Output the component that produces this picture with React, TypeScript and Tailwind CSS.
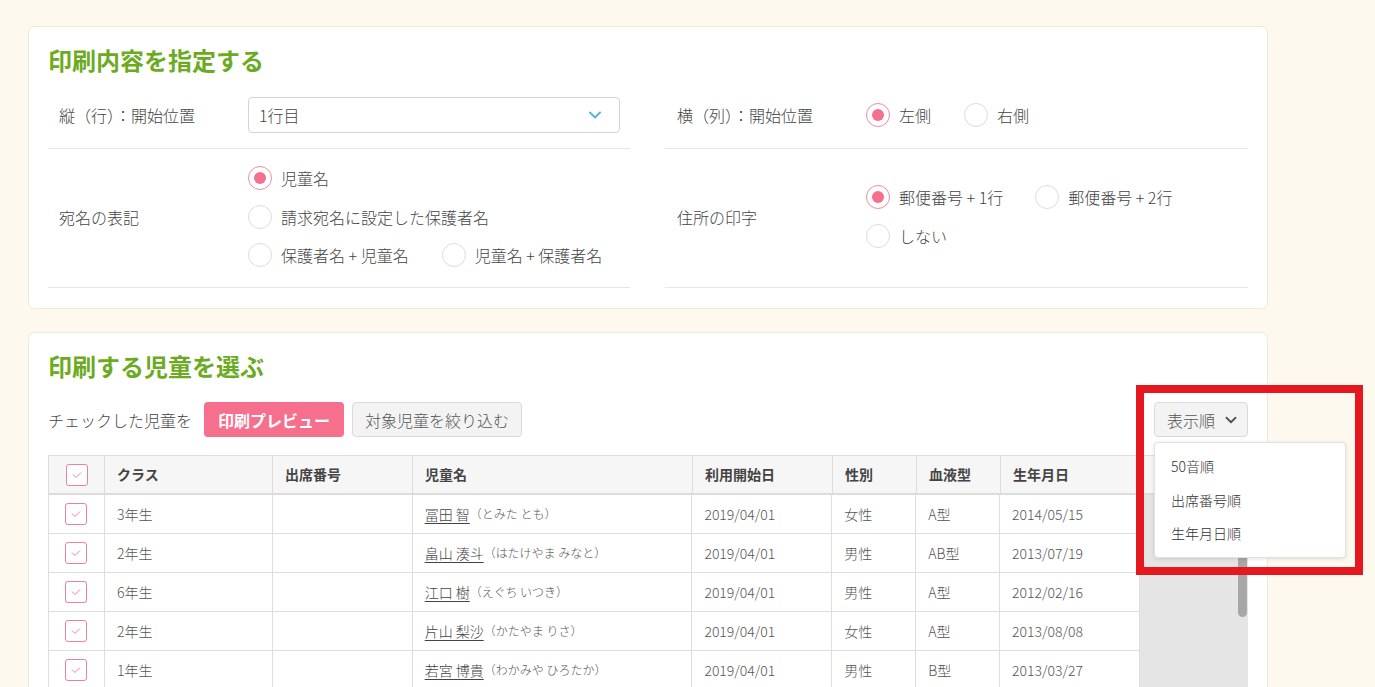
import React from "react";
import { ChevronDown } from "lucide-react";

function Radio({ checked, label }: { checked?: boolean; label: string }) {
  return (
    <div className="flex items-center h-8 gap-[9px]">
      <span
        className={
          checked
            ? "w-6 h-6 rounded-full border border-[#f28aa2] bg-white flex items-center justify-center"
            : "w-6 h-6 rounded-full border border-[#dcdcdc] bg-white flex items-center justify-center"
        }
      >
        {checked && <span className="w-3 h-3 rounded-full bg-[#f4708d]" />}
      </span>
      <span className="text-[16px] text-[#444]">{label}</span>
    </div>
  );
}

function Check() {
  return (
    <span className="w-[22px] h-[22px] rounded-[3px] border border-[#e9829c] bg-white flex items-center justify-center">
      <svg width="12" height="10" viewBox="0 0 12 10">
        <polyline points="2,4.5 5,7.5 10,2.5" fill="none" stroke="#e9829c" strokeWidth="1" />
      </svg>
    </span>
  );
}

const rows = [
  { cls: "3年生", name: "冨田 智", kana: "（とみた とも）", start: "2019/04/01", sex: "女性", blood: "A型", birth: "2014/05/15" },
  { cls: "2年生", name: "畠山 湊斗", kana: "（はたけやま みなと）", start: "2019/04/01", sex: "男性", blood: "AB型", birth: "2013/07/19" },
  { cls: "6年生", name: "江口 樹", kana: "（えぐち いつき）", start: "2019/04/01", sex: "男性", blood: "A型", birth: "2012/02/16" },
  { cls: "2年生", name: "片山 梨沙", kana: "（かたやま りさ）", start: "2019/04/01", sex: "女性", blood: "A型", birth: "2013/08/08" },
  { cls: "1年生", name: "若宮 博貴", kana: "（わかみや ひろたか）", start: "2019/04/01", sex: "男性", blood: "B型", birth: "2013/03/27" },
];

export default function App() {
  return (
    <div className="relative w-[1375px] h-[687px] overflow-hidden bg-[#fdf9ee] pt-[26px] pl-[28px] font-['Noto_Sans_CJK_JP','Noto_Sans',sans-serif] font-light text-[#444]">
      {/* Card 1 */}
      <div className="w-[1240px] bg-white rounded-[6px] border border-[#f0ead9] px-[19px] pt-[17px] pb-5">
        <h2 className="h-8 leading-8 text-[24px] font-bold text-[#6cab21] mb-[6px]">印刷内容を指定する</h2>
        <div className="grid grid-cols-[582px_583px] gap-x-[35px]">
          <div className="flex items-center py-[15px] border-b border-[#e6e6e6]">
            <div className="w-[200px] pl-[11px] text-[16px]">縦（行）：開始位置</div>
            <div className="w-[372px] h-9 border border-[#d4d4d4] rounded-[4px] flex items-center justify-between pl-[10px] pr-[14px]">
              <span className="text-[16px]">1行目</span>
              <ChevronDown size={20} strokeWidth={2.5} color="#5cb6d4" />
            </div>
          </div>
          <div className="flex items-center py-[15px] border-b border-[#e6e6e6]">
            <div className="w-[201px] pl-[12px] text-[16px]">横（列）：開始位置</div>
            <div className="flex items-center gap-[33px]">
              <Radio checked label="左側" />
              <Radio label="右側" />
            </div>
          </div>
          <div className="flex items-center pt-[13px] pb-[16px] border-b border-[#e6e6e6]">
            <div className="w-[200px] pl-[11px] text-[16px]">宛名の表記</div>
            <div className="flex flex-col gap-[6.5px]">
              <Radio checked label="児童名" />
              <Radio label="請求宛名に設定した保護者名" />
              <div className="flex items-center gap-[33px]">
                <Radio label="保護者名 + 児童名" />
                <Radio label="児童名 + 保護者名" />
              </div>
            </div>
          </div>
          <div className="flex items-center pt-[13px] pb-[16px] border-b border-[#e6e6e6]">
            <div className="w-[201px] pl-[12px] text-[16px]">住所の印字</div>
            <div className="flex flex-col gap-[6.5px]">
              <div className="flex items-center gap-[32px]">
                <Radio checked label="郵便番号 + 1行" />
                <Radio label="郵便番号 + 2行" />
              </div>
              <Radio label="しない" />
            </div>
          </div>
        </div>
      </div>

      {/* Card 2 */}
      <div className="mt-[23px] w-[1240px] h-[400px] bg-white rounded-[6px] border border-[#f0ead9] px-[19px] pt-[17px]">
        <h2 className="h-8 leading-8 text-[24px] font-bold text-[#6cab21]">印刷する児童を選ぶ</h2>
        <div className="mt-[20px] h-[35px] flex items-center justify-between">
          <div className="flex items-center">
            <span className="text-[16px]">チェックした児童を</span>
            <button className="ml-[12px] h-[35px] px-[14px] rounded-[4px] bg-[#f66f8c] text-white font-bold text-[16px]">印刷プレビュー</button>
            <button className="ml-2 h-[35px] px-3 rounded-[4px] border border-[#d9d9d9] bg-[#f3f3f3] text-[16px] text-[#555]">対象児童を絞り込む</button>
          </div>
          <div className="relative">
            <button className="w-[94px] h-[35px] rounded-[4px] border border-[#dadada] bg-[#f3f3f3] flex items-center pl-[12px] gap-[7px] text-[16px] text-[#555]">
              表示順
              <ChevronDown size={18} strokeWidth={2.5} color="#555" />
            </button>
            <div className="absolute z-10 left-0 top-[40px] w-[192px] bg-white border border-[#e2e2e2] rounded-[4px] shadow-[0_1px_4px_rgba(0,0,0,0.12)] pt-[7px] pb-[6px]">
              {["50音順", "出席番号順", "生年月日順"].map((t) => (
                <div key={t} className="h-[33.5px] flex items-center pl-4 text-[14px] text-[#333]">{t}</div>
              ))}
            </div>
          </div>
        </div>

        {/* Table */}
        <div className="mt-[18px] w-[1200px]">
          <div className="flex h-[40px] border-t border-l border-[#dddddd] border-b-2 border-b-[#dcdcdc] bg-[#f6f6f6] text-[14px] font-bold text-[#444]">
            <div className="w-[56px] flex items-center justify-center border-r border-[#dddddd]"><Check /></div>
            <div className="w-[168px] flex items-center pl-3 border-r border-[#dddddd]">クラス</div>
            <div className="w-[140px] flex items-center pl-3 border-r border-[#dddddd]">出席番号</div>
            <div className="w-[280px] flex items-center pl-3 border-r border-[#dddddd]">児童名</div>
            <div className="w-[140px] flex items-center pl-3 border-r border-[#dddddd]">利用開始日</div>
            <div className="w-[84px] flex items-center pl-3 border-r border-[#dddddd]">性別</div>
            <div className="w-[84px] flex items-center pl-3 border-r border-[#dddddd]">血液型</div>
            <div className="w-[140px] flex items-center pl-3 border-r border-[#dddddd]">生年月日</div>
            <div className="flex-1" />
          </div>
          <div className="flex">
            <div className="w-[1092px] border-l border-[#dddddd]">
              {rows.map((r, i) => (
                <div key={i} className="flex h-[39px] border-b border-[#dddddd] text-[14px] text-[#555]">
                  <div className="w-[56px] flex items-center justify-center border-r border-[#dddddd]"><Check /></div>
                  <div className="w-[168px] flex items-center pl-3 border-r border-[#dddddd]">{r.cls}</div>
                  <div className="w-[140px] flex items-center pl-3 border-r border-[#dddddd]"></div>
                  <div className="w-[280px] flex items-center pl-3 border-r border-[#dddddd]">
                    <span className="underline underline-offset-[3px] text-[#444]">{r.name}</span>
                    <span className="text-[12px] text-[#555]">{r.kana}</span>
                  </div>
                  <div className="w-[140px] flex items-center pl-3 border-r border-[#dddddd]">{r.start}</div>
                  <div className="w-[84px] flex items-center pl-3 border-r border-[#dddddd]">{r.sex}</div>
                  <div className="w-[84px] flex items-center pl-3 border-r border-[#dddddd]">{r.blood}</div>
                  <div className="w-[140px] flex items-center pl-3 border-r border-[#dddddd]">{r.birth}</div>
                </div>
              ))}
            </div>
            <div className="relative w-[108px] h-[200px] bg-[#e5e5e5]">
              <div className="absolute right-[1px] top-[4px] w-[9px] h-[118px] rounded-full bg-[#a7a7a7]" />
            </div>
          </div>
        </div>
      </div>

      {/* Annotation box */}
      <div className="absolute z-20 left-[1136px] top-[385px] w-[227px] h-[190px] border-[8px] border-[#e5181f]" />
    </div>
  );
}
